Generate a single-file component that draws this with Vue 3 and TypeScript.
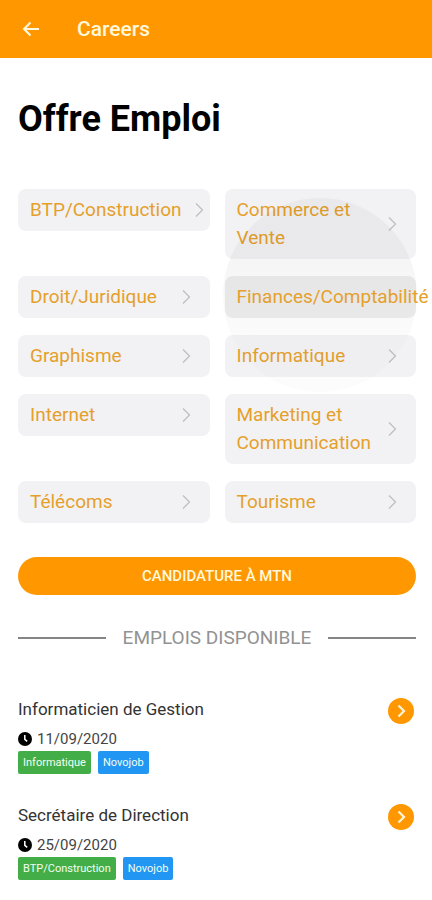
<script setup lang="ts">
interface Category {
  label: string
  tight?: boolean
  pressed?: boolean
}

interface Job {
  title: string
  date: string
  category: string
  source: string
}

const categories: Category[] = [
  { label: 'BTP/Construction', tight: true },
  { label: 'Commerce et Vente' },
  { label: 'Droit/Juridique' },
  { label: 'Finances/Comptabilité', pressed: true },
  { label: 'Graphisme' },
  { label: 'Informatique' },
  { label: 'Internet' },
  { label: 'Marketing et Communication' },
  { label: 'Télécoms' },
  { label: 'Tourisme' },
]

const jobs: Job[] = [
  { title: 'Informaticien de Gestion', date: '11/09/2020', category: 'Informatique', source: 'Novojob' },
  { title: 'Secrétaire de Direction', date: '25/09/2020', category: 'BTP/Construction', source: 'Novojob' },
]
</script>

<template>
  <div class="page">
    <header class="toolbar">
      <button class="back" type="button" aria-label="Retour">
        <svg width="18" height="16" viewBox="0 0 18 16" aria-hidden="true">
          <path d="M17 8H2M8.500 1.500L2 8l6.500 6.500" fill="none" stroke="currentColor" stroke-width="2" />
        </svg>
      </button>
      <span class="toolbar-title">Careers</span>
    </header>

    <main class="content">
      <h1>Offre Emploi</h1>

      <nav class="categories">
        <a
          v-for="item in categories"
          :key="item.label"
          href="#"
          class="category"
          :class="{ tight: item.tight, pressed: item.pressed }"
        >
          <span class="label">{{ item.label }}</span>
          <svg v-if="!item.pressed" class="chevron" width="9" height="16" viewBox="0 0 9 16" aria-hidden="true">
            <path d="M1 1.500L7.500 8L1 14.500" fill="none" stroke="currentColor" stroke-width="1.300" />
          </svg>
          <span v-else class="ripple"></span>
        </a>
      </nav>

      <button class="apply" type="button">CANDIDATURE À MTN</button>

      <h2 class="divider">EMPLOIS DISPONIBLE</h2>

      <ul class="jobs">
        <li v-for="job in jobs" :key="job.title" class="job">
          <div class="job-body">
            <h3>{{ job.title }}</h3>
            <p class="date">
              <svg width="14" height="14" viewBox="0 0 14 14" aria-hidden="true">
                <circle cx="7" cy="7" r="7" fill="#000" />
                <path d="M6.800 3v4.300l2.400 2" fill="none" stroke="#fff" stroke-width="1.500" />
              </svg>
              <span>{{ job.date }}</span>
            </p>
            <div class="tags">
              <span class="tag green">{{ job.category }}</span>
              <span class="tag blue">{{ job.source }}</span>
            </div>
          </div>
          <a class="open" href="#" :aria-label="job.title">
            <svg width="26" height="26" viewBox="0 0 26 26" aria-hidden="true">
              <circle cx="13" cy="13" r="13" fill="#ff9800" />
              <path d="M10.500 7.500L16 13l-5.500 5.500" fill="none" stroke="#fff4d8" stroke-width="2.200" />
            </svg>
          </a>
        </li>
      </ul>
    </main>
  </div>
</template>

<style>
body {
  background: #fff;
}
</style>

<style scoped>
.page {
  font-family: Roboto, 'Liberation Sans', sans-serif;
  color: #333;
  overflow-x: hidden;
}

.toolbar {
  display: flex;
  align-items: center;
  gap: 37px;
  height: 58px;
  padding: 0 22px;
  background: #ff9800;
  color: #fff8dc;
}

.back {
  display: flex;
  padding: 0;
  border: 0;
  background: none;
  color: inherit;
}

.toolbar-title {
  font-size: 21px;
  font-weight: 500;
  line-height: 28px;
}

.content {
  padding: 36px 16px 16px 18px;
}

h1 {
  margin: 0;
  font-size: 36px;
  font-weight: 700;
  line-height: 50px;
  color: #000;
}

.categories {
  display: grid;
  grid-template-columns: repeat(2, minmax(0, 1fr));
  align-items: start;
  gap: 17px 15px;
  margin-top: 45px;
}

.category {
  position: relative;
  display: flex;
  align-items: center;
  justify-content: space-between;
  padding: 7px 19px 7px 12px;
  border-radius: 8px;
  background: #f2f2f5;
  color: #e5a02c;
  font-size: 19px;
  line-height: 28px;
  text-decoration: none;
}

.category.tight {
  padding-right: 6px;
}

.category.pressed {
  background: #eeeeef;
}

.category.pressed .label {
  position: relative;
  z-index: 2;
}

.chevron {
  flex: none;
  color: #bfbfc3;
}

.ripple {
  position: absolute;
  top: 45%;
  left: 50%;
  z-index: 1;
  width: 194px;
  height: 194px;
  border-radius: 50%;
  background: linear-gradient(rgba(0, 0, 0, 0.035) 35%, rgba(0, 0, 0, 0.025) 60%, rgba(0, 0, 0, 0.012) 75%);
  transform: translate(-50%, -50%);
  pointer-events: none;
}

.apply {
  display: block;
  width: 100%;
  height: 38px;
  margin-top: 34px;
  padding: 0;
  border: 0;
  border-radius: 19px;
  background: #ff9800;
  color: #fff8dc;
  font-family: inherit;
  font-size: 15px;
  font-weight: 500;
}

.divider {
  display: flex;
  align-items: center;
  gap: 17px;
  margin: 29px 0 0;
  font-size: 19px;
  font-weight: 400;
  line-height: 28px;
  color: #929292;
}

.divider::before,
.divider::after {
  content: '';
  flex: 1;
  height: 2px;
  background: #858585;
}

.jobs {
  display: flex;
  flex-direction: column;
  gap: 28px;
  margin: 44px 0 0;
  padding: 0;
  list-style: none;
}

.job {
  display: flex;
  align-items: flex-start;
  justify-content: space-between;
  padding-right: 2px;
}

h3 {
  margin: 0;
  font-size: 17px;
  font-weight: 400;
  line-height: 26px;
}

.date {
  display: flex;
  align-items: center;
  gap: 5px;
  margin: 6px 0 0;
  font-size: 15px;
  line-height: 22px;
  color: #444;
}

.tags {
  display: flex;
  gap: 7px;
  margin-top: 1px;
}

.tag {
  padding: 0 5px;
  border-radius: 2px;
  color: #f2fff2;
  font-size: 11px;
  line-height: 23px;
}

.green {
  background: #43ad48;
}

.blue {
  background: #2196f3;
}

.open {
  display: flex;
  margin-top: 2px;
}
</style>
